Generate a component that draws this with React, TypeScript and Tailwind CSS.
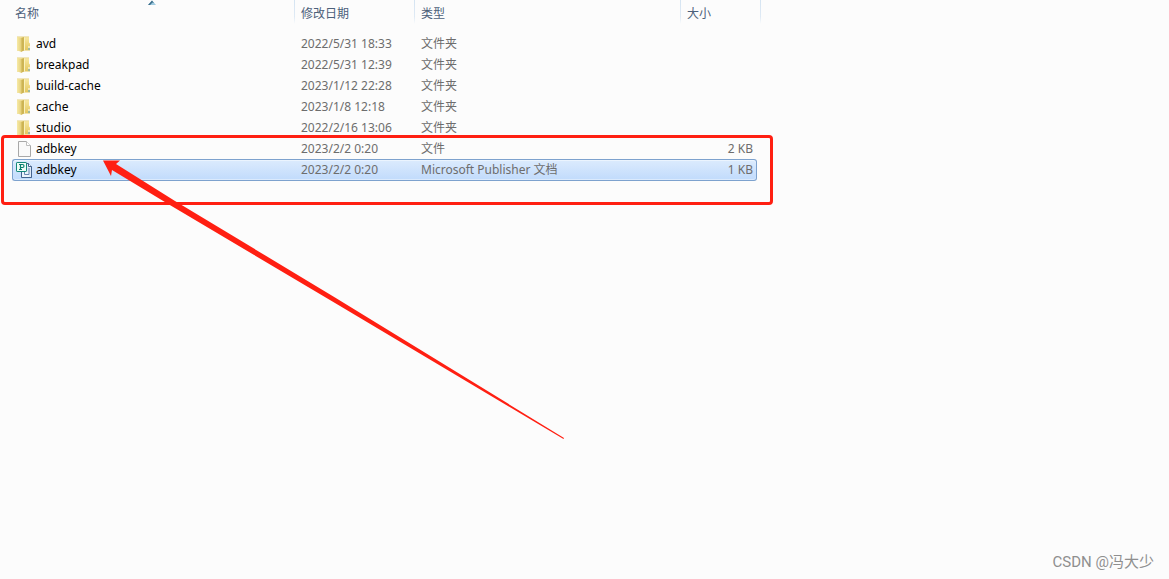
import React from 'react';

type FileKind = 'folder' | 'blank' | 'publisher';

interface FileEntry {
  name: string;
  modified: string;
  type: string;
  size: string;
  kind: FileKind;
  selected?: boolean;
}

const files: FileEntry[] = [
  { name: 'avd', modified: '2022/5/31 18:33', type: '文件夹', size: '', kind: 'folder' },
  { name: 'breakpad', modified: '2022/5/31 12:39', type: '文件夹', size: '', kind: 'folder' },
  { name: 'build-cache', modified: '2023/1/12 22:28', type: '文件夹', size: '', kind: 'folder' },
  { name: 'cache', modified: '2023/1/8 12:18', type: '文件夹', size: '', kind: 'folder' },
  { name: 'studio', modified: '2022/2/16 13:06', type: '文件夹', size: '', kind: 'folder' },
  { name: 'adbkey', modified: '2023/2/2 0:20', type: '文件', size: '2 KB', kind: 'blank' },
  { name: 'adbkey', modified: '2023/2/2 0:20', type: 'Microsoft Publisher 文档', size: '1 KB', kind: 'publisher', selected: true },
];

const FolderIcon = () => (
  <svg width="16" height="16" viewBox="0 0 16 16" className="shrink-0">
    <defs>
      <linearGradient id="folderFront" x1="0" x2="1">
        <stop offset="0" stopColor="#f7eaa6" />
        <stop offset="1" stopColor="#e3ce78" />
      </linearGradient>
      <linearGradient id="folderBack" x1="0" x2="0" y1="0" y2="1">
        <stop offset="0" stopColor="#f8e9a2" />
        <stop offset="1" stopColor="#e3c65c" />
      </linearGradient>
    </defs>
    <path d="M1 1h12v5.500l1 1v7L1 14.500z" fill="url(#folderBack)" />
    <path d="M1 .8h12" stroke="#e6d48c" strokeWidth=".8" />
    <path d="M5 2l3-1v13.500L5 16z" fill="#cdb453" />
    <path d="M1 1.200l4.500.8v14L1 14.200z" fill="url(#folderFront)" />
    <path d="M8 1.500h1v13H8z" fill="#faf1bd" />
    <path d="M12.500 10h1v2h-1z" fill="#fff" />
    <path d="M12.500 12h1v2h-1z" fill="#59a9dc" />
  </svg>
);

const BlankIcon = () => (
  <svg width="16" height="16" viewBox="0 0 16 16" className="shrink-0">
    <path d="M2.500 .5h8l4 4v11h-12z" fill="#f9f9f9" stroke="#a8a8a8" />
    <path d="M10.500 .5v4h4" fill="#fff" stroke="#bdbdbd" />
  </svg>
);

const PublisherIcon = () => (
  <svg width="16" height="16" viewBox="0 0 16 16" className="shrink-0">
    <path d="M8.500 1.500h4l3 3v11h-7z" fill="#dfeaf7" stroke="#44648f" />
    <path d="M12.500 1.500v3h3" fill="#fff" stroke="#44648f" />
    <path d="M5.500 9.500v6h10" fill="none" stroke="#44648f" />
    <path d="M6 10h7v5H6z" fill="#eef5fd" />
    <path d="M8.500 10v2.500h4.500V6" fill="none" stroke="#6b88b2" />
    <rect x=".5" y=".5" width="10" height="9" rx=".6" fill="#effcf7" stroke="#148878" />
    <path d="M4.500 7.500v-5h2a1.500 1.500 0 0 1 0 3h-2M3 2.500h1.500M3 7.500h3" fill="none" stroke="#087f6d" strokeWidth="1.200" />
  </svg>
);

const icons: Record<FileKind, React.FC> = {
  folder: FolderIcon,
  blank: BlankIcon,
  publisher: PublisherIcon,
};

const headCell = 'p-0 pt-[5px] font-normal';
const headDivider =
  'bg-[linear-gradient(to_bottom,#d5e4f2,#dfeaf5_70%,transparent)] bg-[length:1px_24px] bg-no-repeat bg-[position:right_top]';

const FileRow: React.FC<{ file: FileEntry }> = ({ file }) => {
  const Icon = icons[file.kind];
  const fill = file.selected
    ? 'border-y border-[#7da2ce] bg-linear-to-b from-[#dcebfd] to-[#c1dbfc] shadow-[inset_0_1px_#ebf4fe,inset_0_-1px_#dbeafd]'
    : 'border-y border-transparent';

  return (
    <tr className={`text-[#6d6d6d] ${file.selected ? 'h-[22px]' : 'h-[21px]'}`}>
      <td className={`p-0 ${fill} ${file.selected ? 'rounded-l-[3px] border-l pl-[3px]' : 'pl-1'}`}>
        <div className="flex items-center gap-1 text-black">
          <Icon />
          <span>{file.name}</span>
        </div>
      </td>
      <td className={`p-0 pl-1.5 ${fill}`}>{file.modified}</td>
      <td className={`p-0 pl-1.5 ${fill}`}>{file.type}</td>
      <td className={`p-0 text-right ${fill} ${file.selected ? 'rounded-r-[3px] border-r pr-[3px]' : 'pr-1'}`}>{file.size}</td>
      <td className="p-0"></td>
    </tr>
  );
};

const App: React.FC = () => {
  return (
    <div className="relative min-h-screen overflow-hidden bg-[#fcfcfc] font-['Noto_Sans','Noto_Sans_CJK_SC',sans-serif] text-[12px] leading-[18px]">
      <table className="ml-3 w-[749px] table-fixed border-separate border-spacing-0">
        <colgroup>
          <col className="w-[283px]" />
          <col className="w-[120px]" />
          <col className="w-[266px]" />
          <col className="w-[76px]" />
          <col className="w-1" />
        </colgroup>
        <thead>
          <tr className="h-[33px] text-left align-top text-[#4c607a]">
            <th className={`relative pl-[3px] ${headCell} ${headDivider}`}>
              名称
              {/* Sort direction marker */}
              <svg width="8" height="5" viewBox="0 0 8 5" className="absolute left-1/2 top-0 -ml-1.5">
                <path d="M4 .5L8 5H0z" fill="#9fcbe0" />
                <path d="M4 .5L0 5h2L4.500 2.500 6 3z" fill="#3c6f8c" />
              </svg>
            </th>
            <th className={`pl-1.5 ${headCell} ${headDivider}`}>修改日期</th>
            <th className={`pl-1.5 ${headCell} ${headDivider}`}>类型</th>
            <th className={`pl-1.5 ${headCell}`}>大小</th>
            <td className={`p-0 ${headDivider}`}></td>
          </tr>
        </thead>
        <tbody>
          {files.map((file, i) => (
            <FileRow key={i} file={file} />
          ))}
        </tbody>
      </table>

      {/* Highlight box and arrow drawn over the list */}
      <div className="pointer-events-none absolute left-px top-[135px] h-[70px] w-[772px] rounded-[4px] border-3 border-[#ff1f12]"></div>
      <svg width="462" height="280" viewBox="0 0 462 280" className="pointer-events-none absolute left-[103px] top-40">
        <path d="M0 .5L17 .5L13 4L72 41L232 137.500L461 278L460.500 279L232 143L66 44.500L9 10L8 16z" fill="#ff1f12" />
      </svg>

      <div className="absolute bottom-1.5 right-[15px] font-['Roboto','Noto_Sans_CJK_SC',sans-serif] text-[15px] leading-[22px] text-[#8f8f8f]">
        CSDN @冯大少
      </div>
    </div>
  );
};

export default App;
